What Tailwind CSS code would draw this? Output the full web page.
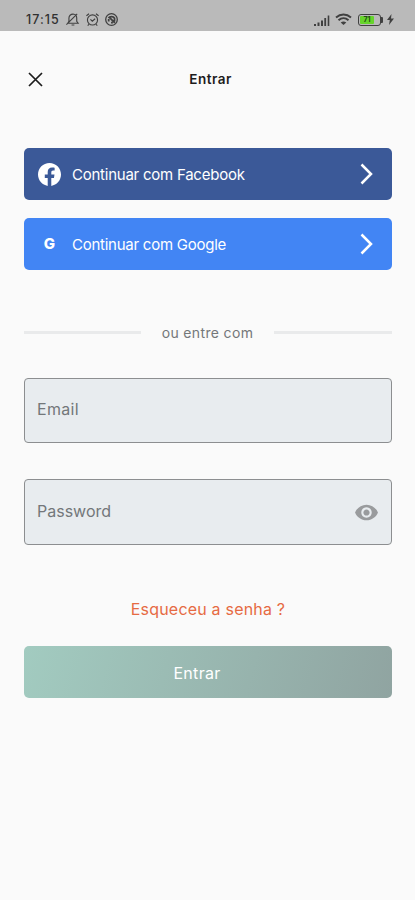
<!DOCTYPE html>
<html lang="pt-BR">
<head>
  <meta charset="UTF-8" />
  <meta name="viewport" content="width=device-width, initial-scale=1.0" />
  <title>Entrar</title>
  <script src="https://cdn.jsdelivr.net/npm/@tailwindcss/browser@4"></script>
</head>
<body class="bg-[#fafafa] min-h-screen font-['Inter','Open_Sans',sans-serif]">
  <!-- Status bar -->
  <div class="h-[31px] bg-[#bababa] flex items-center justify-between pt-[8px] pl-[26px] pr-[21px] text-[#404040]">
    <div class="flex items-center">
      <span class="w-[35px] pt-[2px] text-[12.5px] font-medium leading-none tracking-[1px] whitespace-nowrap text-[#303030]">17:15</span>
      <svg class="ml-[4px] w-[15px] h-[15px]" viewBox="0 0 16 16" fill="none" stroke="currentColor" stroke-width="1.2">
        <path d="M3 12h11l-1.500-2V6.500A4.300 4.300 0 0 0 8.500 2.200 4.300 4.300 0 0 0 4.200 6.500V10zM7 13.800h3M1.500 13.500L13 2" />
      </svg>
      <svg class="ml-[5px] w-[15px] h-[15px]" viewBox="0 0 16 16" fill="none" stroke="currentColor" stroke-width="1.200">
        <circle cx="8" cy="8.500" r="5.400" />
        <path d="M1.500 4L4.300 1.800M14.500 4l-2.800-2.200M5.800 7.800l2 2 3-2.600M4 13l-1 1.600M12 13l1 1.600" />
      </svg>
      <svg class="ml-[4px] w-[15px] h-[15px]" viewBox="0 0 16 16" fill="none" stroke="currentColor">
        <circle cx="8" cy="8" r="6.200" stroke-width="1.400" />
        <path d="M4.800 6.500C6 4.300 10 4.300 11.200 6.500V10M5 7.500v2.500M7.500 11.300h2M5.500 5.500l6 6" stroke-width="1.900" />
      </svg>
    </div>
    <div class="flex items-center">
      <svg class="w-[16px] h-[12px]" viewBox="0 0 16 12" fill="currentColor">
        <path d="M0 10h2v2H0zM3.500 8.500h2V12h-2zM7 6.500h2V12H7zM10.300 4h1.800v8h-1.800zM13.700 1.500h1.600V12h-1.600z" />
      </svg>
      <svg class="ml-[5px] w-[17px] h-[13px]" viewBox="0 0 17 13" fill="none" stroke="currentColor" stroke-width="1.900">
        <path d="M1 4.500c4.500-4 10.500-4 15 0M3.500 7.200c3-2.700 7-2.700 10 0" />
        <path d="M5.700 9.500c1.700-1.400 3.900-1.400 5.600 0L8.500 12z" fill="currentColor" stroke="none" />
      </svg>
      <div class="ml-[6px] w-[23px] h-[12px] rounded-[3px] border-[1.5px] border-[#404040] p-[1px]">
        <div class="w-[14px] h-full bg-[#66d42c] rounded-[1px] text-[7px] font-bold leading-[8px] text-center text-[#254a17]">71</div>
      </div>
      <div class="w-[2px] h-[6px] bg-[#404040] rounded-r-[1px]"></div>
      <svg class="ml-[4px] w-[7px] h-[11px]" viewBox="0 0 7 11" fill="currentColor">
        <path d="M4.500 0L0 6h2.800L2 11l5-6.500H4z" />
      </svg>
    </div>
  </div>

  <main class="pl-[24px] pr-[23px]">
    <!-- Header -->
    <header class="mt-[35px] h-[25px] grid grid-cols-3 items-center">
      <svg class="mt-[2px] ml-[4px] w-[15px] h-[15px]" viewBox="0 0 15 15" fill="none" stroke="#1c1c1c" stroke-width="1.700">
        <path d="M1 1l13 13M14 1L1 14" />
      </svg>
      <h1 class="pt-[2px] pl-[5px] text-center text-[13.5px] font-semibold tracking-[0.5px] text-[#1c1c1c]">Entrar</h1>
    </header>

    <!-- Social login -->
    <div class="mt-[57px] flex flex-col gap-[18px]">
      <button class="h-[52px] rounded-[5px] bg-[#3b5998] flex items-center pl-[14px] pr-[19px] text-white">
        <svg class="w-[23px] h-[23px]" viewBox="0 0 24 24" fill="currentColor">
          <path d="M24 12.073c0-6.627-5.373-12-12-12s-12 5.373-12 12c0 5.990 4.388 10.954 10.125 11.854v-8.385H7.078v-3.470h3.047V9.430c0-3.007 1.792-4.669 4.533-4.669 1.312 0 2.686.235 2.686.235v2.953H15.830c-1.491 0-1.956.925-1.956 1.874v2.250h3.328l-.532 3.470h-2.796v8.385C19.612 23.027 24 18.062 24 12.073z" />
        </svg>
        <span class="ml-[11px] pt-[2px] text-[15px] tracking-[-0.24px]">Continuar com Facebook</span>
        <svg class="ml-auto w-[13px] h-[22px]" viewBox="0 0 13 22" fill="none" stroke="currentColor" stroke-width="2.500">
          <path d="M1.500 1.500L11 11l-9.500 9.500" />
        </svg>
      </button>
      <button class="h-[52px] rounded-[5px] bg-[#4285f4] flex items-center pl-[14px] pr-[19px] text-white">
        <span class="w-[23px] pl-[-1px] text-center text-[15px] font-extrabold">G</span>
        <span class="ml-[11px] pt-[2px] text-[15px] tracking-[-0.25px]">Continuar com Google</span>
        <svg class="ml-auto w-[13px] h-[22px]" viewBox="0 0 13 22" fill="none" stroke="currentColor" stroke-width="2.500">
          <path d="M1.500 1.500L11 11l-9.500 9.500" />
        </svg>
      </button>
    </div>

    <!-- Divider -->
    <div class="mt-[51px] h-[22px] flex items-center justify-between">
      <div class="w-[117px] h-[3px] bg-[#e9eaeb]"></div>
      <span class="text-[14px] tracking-[0.35px] text-[#747779]">ou entre com</span>
      <div class="w-[118px] h-[3px] bg-[#e9eaeb]"></div>
    </div>

    <!-- Form -->
    <form>
      <div class="mt-[35px] h-[65px] rounded-[4px] border border-[#8c8e90] bg-[#e8ecef] flex items-center px-[12px] pb-[3px]">
        <span class="text-[16px] tracking-[0.3px] text-[#73777a]">Email</span>
      </div>
      <div class="mt-[36px] h-[66px] rounded-[4px] border border-[#8c8e90] bg-[#e8ecef] flex items-center justify-between px-[12px]">
        <span class="pb-[3px] text-[16px] text-[#73777a]">Password</span>
        <svg class="w-[25px] h-[25px]" viewBox="0 0 24 24" fill="#999b9d">
          <path d="M12 4.500C7 4.500 2.730 7.610 1 12c1.730 4.390 6 7.500 11 7.500s9.270-3.110 11-7.500c-1.730-4.390-6-7.500-11-7.500zM12 17c-2.760 0-5-2.240-5-5s2.240-5 5-5 5 2.240 5 5-2.240 5-5 5zm0-8c-1.660 0-3 1.340-3 3s1.340 3 3 3 3-1.340 3-3-1.340-3-3-3z" />
        </svg>
      </div>
      <a href="#" class="mt-[52px] block text-center text-[16px] leading-[24px] tracking-[0.2px] text-[#e66a43]">Esqueceu a senha ?</a>
      <button type="button" class="mt-[25px] w-full h-[52px] rounded-[5px] bg-linear-[105deg,#a2cbc0,#90a4a1] text-white text-[16px] tracking-[0.3px] pt-px pr-[22px]">Entrar</button>
    </form>
  </main>
</body>
</html>
